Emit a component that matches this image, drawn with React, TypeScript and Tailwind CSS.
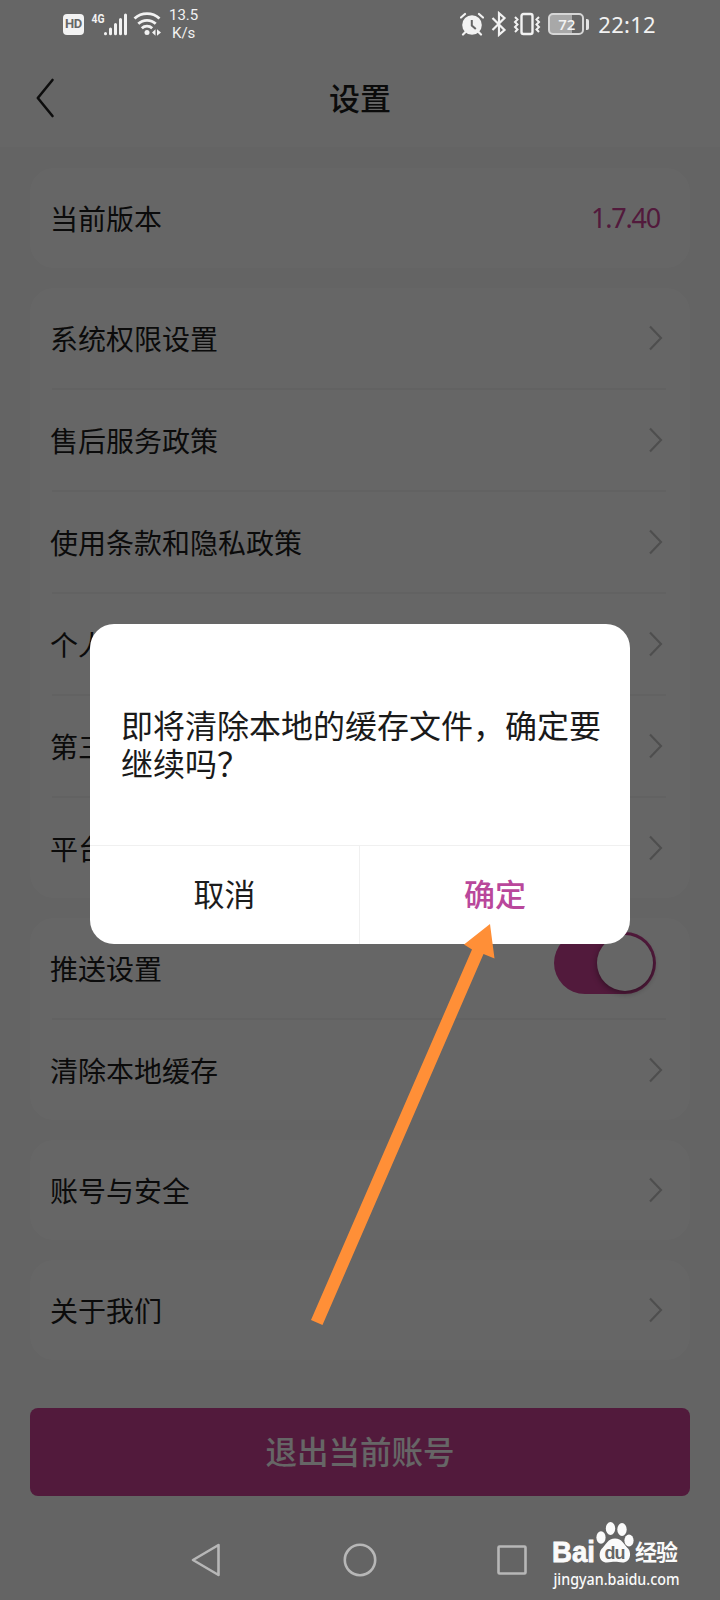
import React, { useState } from 'react';

const chevronRows = ['系统权限设置', '售后服务政策', '使用条款和隐私政策', '个人', '第三', '平台'];

const ChevronIcon = () => (
  <svg width="14" height="26" viewBox="0 0 14 26" fill="none" stroke="#c4c4c4" strokeWidth="2.2">
    <path d="M1 1.5 12 13 1 24.5" />
  </svg>
);

const StatusBar = () => (
  <div className="absolute inset-x-0 top-0 z-20 flex h-[48px] items-center justify-between pl-[63px] pr-[64px] text-[#f2f2f2]">
    <div className="flex items-center">
      <span className="flex h-[21px] w-[21px] items-center justify-center rounded-[4px] bg-[#f2f2f2] font-['Roboto',sans-serif] text-[13px] font-bold tracking-tight text-[#666]">HD</span>
      <svg className="ml-[7px]" width="70" height="24" viewBox="0 0 70 24" fill="none">
        <text x="0.5" y="10.5" fill="#f2f2f2" fontFamily="Roboto, sans-serif" fontSize="12.5" fontWeight="700" textLength="13" lengthAdjust="spacingAndGlyphs">4G</text>
        <g stroke="#f2f2f2" strokeWidth="3" strokeLinecap="round">
          <path d="M14.5 21.5v.3M19.5 17v4.8M24.5 12.5v9.3M29.5 7.5v14.3M34.500 3v18.8" />
        </g>
        <g stroke="#f2f2f2" strokeWidth="2.8">
          <path d="M43.5 6.5a18.5 18.5 0 0 1 25 0M47.3 11.8a12.5 12.5 0 0 1 17.4 0M50.8 16.2a7.600 7.600 0 0 1 10.4 0" />
        </g>
        <circle cx="56" cy="20.5" r="2.5" fill="#f2f2f2" />
        <path d="m61 20.5 3.5-3.2v6.4zM70 20.5l-4-3.2v6.4z" fill="#f2f2f2" />
      </svg>
      <div className="ml-[8px] font-['Roboto',sans-serif] text-[15px] leading-[18px]">
        <div>13.5</div>
        <div className="pl-[3px]">K/s</div>
      </div>
    </div>
    <div className="flex items-center">
      <svg width="24" height="24" viewBox="0 0 24 24">
        <circle cx="12" cy="13" r="9.8" fill="#f2f2f2" />
        <path d="M1 5.5 5 2M23 5.5 19 2M5.500 20 3 22.5M18.5 20 21 22.5" stroke="#f2f2f2" strokeWidth="2.2" strokeLinecap="round" />
        <path d="M11.8 8v5.5l4 3.5" stroke="#666" strokeWidth="2" fill="none" />
      </svg>
      <svg className="ml-[7px]" width="16" height="26" viewBox="0 0 16 26" fill="none" stroke="#f2f2f2" strokeWidth="2.2">
        <path d="m1.5 7 12 12L8 23.8V2.2L13.500 7l-12 12" />
      </svg>
      <svg className="ml-[6px]" width="28" height="24" viewBox="0 0 28 24" fill="none" stroke="#f2f2f2">
        <rect x="8.5" y="2" width="11" height="20" rx="2" strokeWidth="2.4" />
        <path d="m2 5 2.500 2.500L2 10l2.500 2.500L2 15l2.500 2.500L2 20M26 5l-2.500 2.500L26 10l-2.500 2.500L26 15l-2.500 2.500L26 20" strokeWidth="2" />
      </svg>
      <div className="ml-[7px] flex items-center gap-[2px]">
        <span className="flex h-[22px] w-[36px] items-center rounded-[5px] border-2 border-[#d6d6d6] bg-linear-to-r from-[#a8a8a8] from-70% to-[#666] to-70% pl-[8px] font-['Open_Sans',sans-serif] text-[15px] font-semibold leading-none">72</span>
        <span className="h-[11px] w-[3px] rounded-r-[2px] bg-[#e4e4e4]" />
      </div>
      <span className="ml-[9px] font-['Noto_Sans',sans-serif] text-[22px] leading-none tracking-[0.3px]">22:12</span>
    </div>
  </div>
);

const Row = ({ label, children }: { label: string; children?: React.ReactNode }) => (
  <div className="flex h-[100px] items-center justify-between pl-[20px] pr-[27px]">
    <span className="text-[28px] leading-none">{label}</span>
    {children ?? <ChevronIcon />}
  </div>
);

const Divider = () => <div className="ml-[22px] mr-[24px] h-[2px] bg-[#f6f6f6]" />;

const Card = ({ children }: { children: React.ReactNode }) => (
  <section className="rounded-[24px] bg-white">{children}</section>
);

const NavBar = () => (
  <div className="absolute inset-x-0 bottom-0 z-20 h-[80px]">
    <svg width="720" height="80" viewBox="0 0 720 80" fill="none" stroke="#b7b7b7" strokeWidth="2.6" strokeLinejoin="round">
      <path d="M193 40 218.5 25v30z" />
      <circle cx="360" cy="40" r="15.2" />
      <rect x="498.5" y="26.5" width="27" height="27" rx="1" />
    </svg>
  </div>
);

const Watermark = () => (
  <svg className="absolute bottom-[4px] left-[546px] z-30" width="160" height="80" viewBox="-2 0 160 80" fill="#fafafa">
    <text x="4" y="45.500" fontFamily="Liberation Sans, sans-serif" fontSize="29" fontWeight="700" textLength="43" lengthAdjust="spacingAndGlyphs" stroke="#fafafa" strokeWidth="0.8">Bai</text>
    <ellipse cx="53" cy="21.5" rx="4.6" ry="6.2" />
    <ellipse cx="62.5" cy="12.500" rx="4.700" ry="6.500" />
    <ellipse cx="74" cy="13.5" rx="4.7" ry="6.5" />
    <ellipse cx="81" cy="24.5" rx="4.6" ry="6" />
    <path d="M67 22.500c7 0 9 6 12.5 9.5 4.500 4 3.500 14.500-5 14.500-3 0-5-.7-7.500-.7s-5 .7-8 .7c-8.500 0-9-10.500-4.500-14.500C58 28.500 60 22.500 67 22.500z" />
    <text x="56.500" y="43" fill="#666" fontFamily="Liberation Sans, sans-serif" fontSize="18" fontWeight="700" textLength="21">du</text>
    <text x="87" y="44" fontFamily="'Noto Sans CJK SC', sans-serif" fontSize="22" fontWeight="700" textLength="43">经验</text>
    <text x="5.500" y="69" fontFamily="'Noto Sans', sans-serif" fontSize="16" fontWeight="500" textLength="126" lengthAdjust="spacingAndGlyphs">jingyan.baidu.com</text>
  </svg>
);

const App: React.FC = () => {
  const [open, setOpen] = useState<boolean>(true);
  const [push, setPush] = useState<boolean>(true);

  return (
    <div className="relative h-[1600px] w-[720px] overflow-hidden bg-[#f9f9f9] font-['Noto_Sans_CJK_SC',sans-serif] text-[#1c1c1c]">
      <StatusBar />

      <header className="grid h-[147px] grid-cols-[1fr_auto_1fr] items-center bg-white px-[36px] pt-[49px]">
        <svg width="20" height="40" viewBox="0 0 20 40" fill="none" stroke="#222" strokeWidth="2.6" strokeLinecap="round" strokeLinejoin="round">
          <path d="M16.5 2 1.8 20l14.7 18" />
        </svg>
        <h1 className="pb-[3px] text-[31px] font-medium leading-none">设置</h1>
      </header>

      <main className="flex flex-col gap-5 px-[30px] pt-[21px]">
        <Card>
          <Row label="当前版本">
            <span className="mr-[3px] font-['Noto_Sans',sans-serif] text-[27px] tracking-[-1.2px] text-[#cd4196]">1.7.40</span>
          </Row>
        </Card>
        <Card>
          {chevronRows.map((label, i) => (
            <React.Fragment key={label}>
              {i > 0 && <Divider />}
              <Row label={label} />
            </React.Fragment>
          ))}
        </Card>
        <Card>
          <Row label="推送设置">
            <button
              onClick={() => setPush(!push)}
              className={`mr-[7px] mb-[10px] flex h-[62px] w-[102px] items-center rounded-full px-[3px] ${push ? 'justify-end bg-[#cd4196]' : 'justify-start bg-gray-300'}`}
            >
              <span className="h-[56px] w-[56px] rounded-full bg-white shadow-[0_2px_6px_rgba(0,0,0,0.4)]" />
            </button>
          </Row>
          <Divider />
          <Row label="清除本地缓存" />
        </Card>
        <Card>
          <Row label="账号与安全" />
        </Card>
        <Card>
          <Row label="关于我们" />
        </Card>
        <button className="mt-[28px] h-[88px] rounded-[8px] bg-[#cd4196] pb-[2px] text-[31.5px] font-medium leading-none text-white">
          退出当前账号
        </button>
      </main>

      {open && (
        <div className="absolute inset-0 z-10 bg-black/60 px-[90px] pt-[624px]">
          <div className="flex h-[320px] flex-col overflow-hidden rounded-[24px] bg-white">
            <p className="h-[221px] w-[520px] pl-[31px] pt-[81px] text-[32px] leading-[38px] text-[#1a1a1a]">
              即将清除本地的缓存文件，确定要继续吗？
            </p>
            <div className="grid flex-1 grid-cols-2 border-t border-[#f0f0f0] text-[31px]">
              <button className="border-r border-[#f0f0f0] pb-[4px]" onClick={() => setOpen(false)}>取消</button>
              <button className="pb-[4px] font-medium text-[#b9479b]" onClick={() => setOpen(false)}>确定</button>
            </div>
          </div>
        </div>
      )}

      <svg className="absolute left-[300px] top-[920px] z-20" width="200" height="410" viewBox="0 0 200 410">
        <path d="M190 4 194.5 38.5 183.5 34 22.5 405 11 400 172 29.5 164 24.5z" fill="#ff8f37" />
      </svg>

      <NavBar />
      <Watermark />
    </div>
  );
};

export default App;
